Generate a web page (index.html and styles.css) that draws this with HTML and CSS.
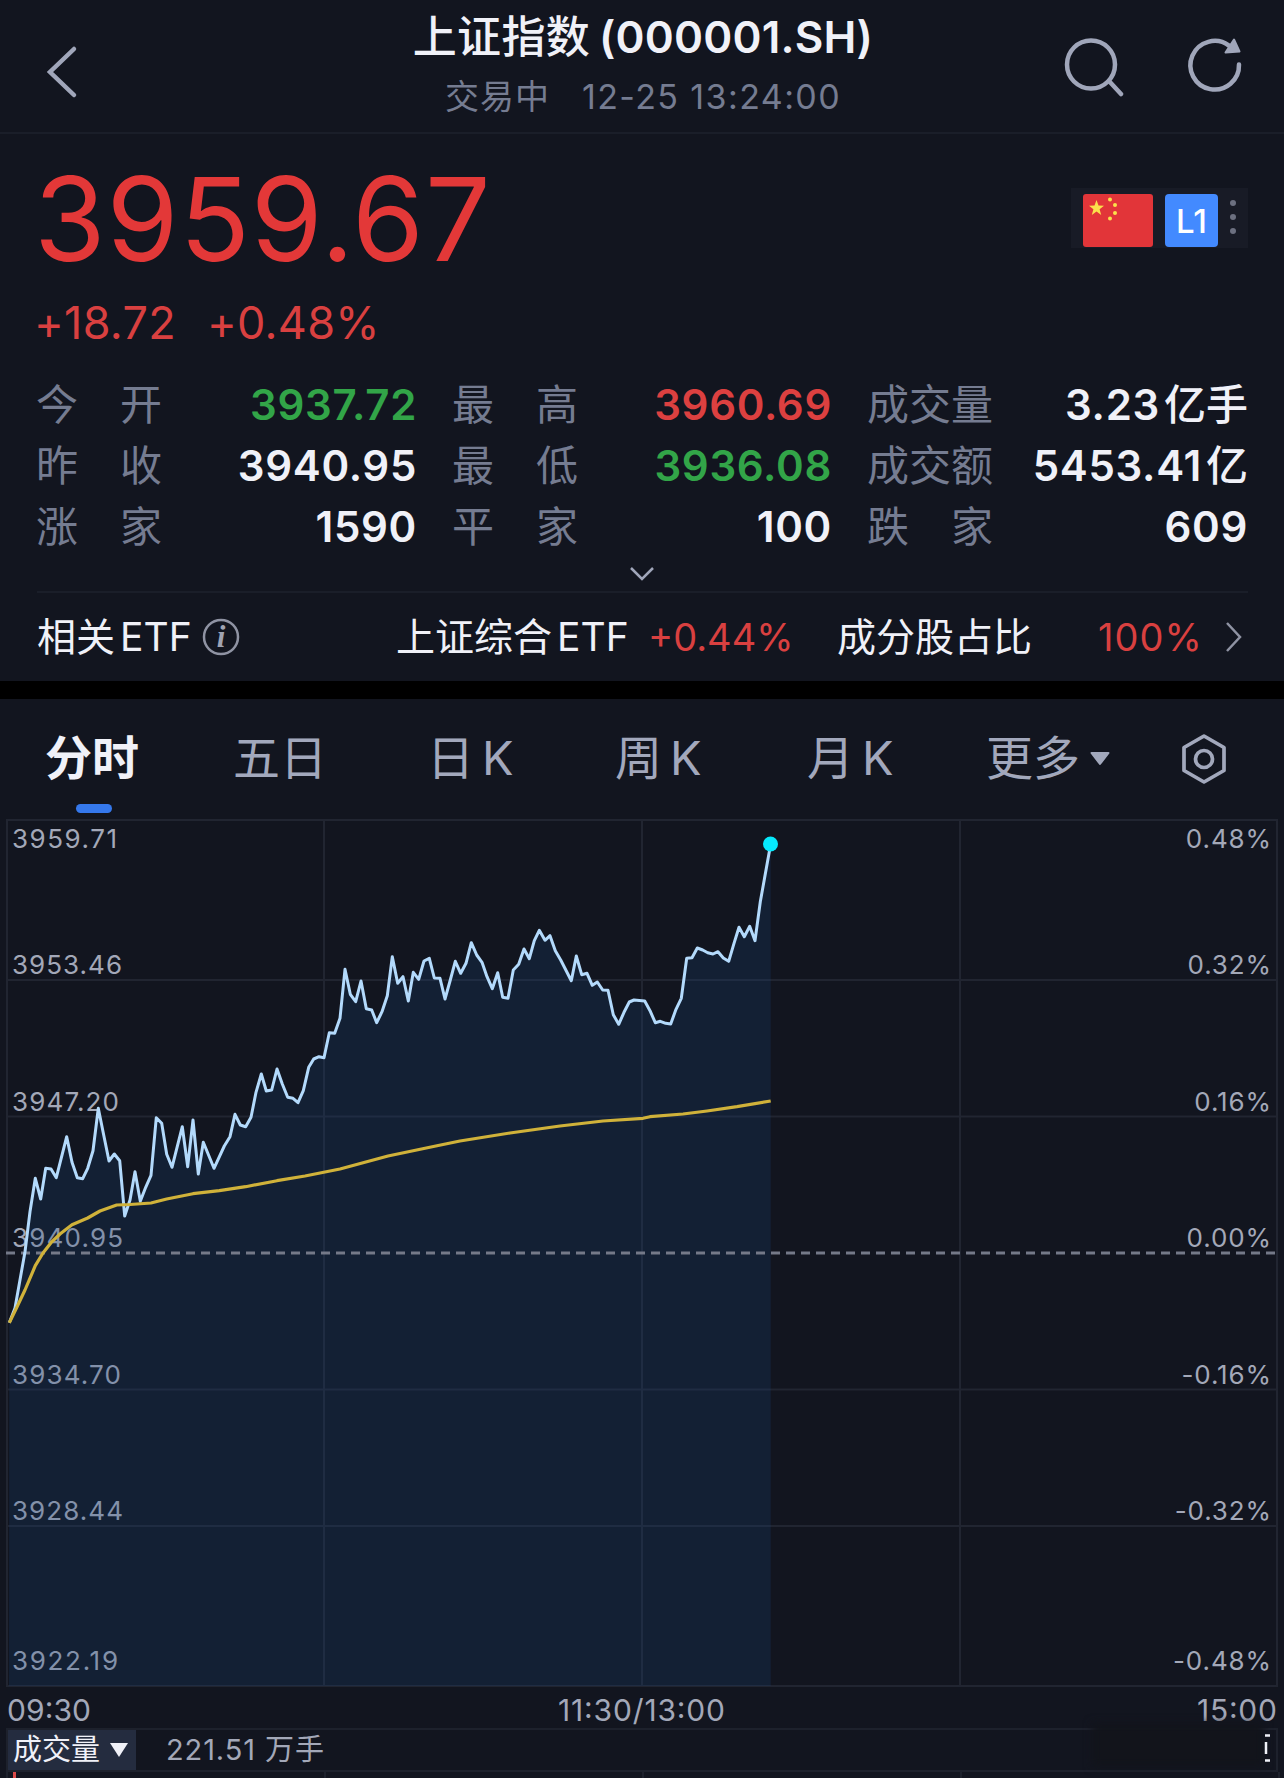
FILE: index.html
```html
<!DOCTYPE html>
<html lang="zh-CN">
<head>
    <meta charset="UTF-8" />
    <meta name="viewport" content="width=device-width, initial-scale=1" />
    <title>上证指数 (000001.SH)</title>
    <link rel="stylesheet" href="styles.css">
</head>
<body>

    <!-- Header -->
    <header class="header">
        <svg class="back" width="36" height="56" viewBox="0 0 36 56"><path d="M31 5 7 28l24 23" /></svg>
        <div class="heading">
            <h1>上证指数<span>(000001.SH)</span></h1>
            <p><span class="state">交易中</span><span class="time">12-25 13:24:00</span></p>
        </div>
        <div class="actions">
            <svg width="64" height="64" viewBox="0 0 64 64"><circle cx="30" cy="31.5" r="24" /><path d="m48 48 12 13" /></svg>
            <svg width="60" height="64" viewBox="0 0 60 64">
                <path d="M54 31.5A24.3 24.3 0 1 1 44 12.6" />
                <path class="solid" d="m49 6.500 5.500 12-14 1z" />
            </svg>
        </div>
    </header>

    <!-- Price -->
    <section class="quote">
        <div class="price-row">
            <div class="price">3959.67</div>
            <div class="badges">
                <svg class="flag" width="70" height="53" viewBox="0 0 70 53">
                    <rect width="70" height="53" rx="3" />
                    <path d="m13.500 6 2 5.600 5.500.1-4.400 3.600 1.600 5.700-4.700-3.400L8.800 21l1.600-5.700L6 11.700l5.500-.1z" />
                    <circle cx="27" cy="5.500" r="2" /><circle cx="32" cy="11" r="2" />
                    <circle cx="32" cy="19" r="2" /><circle cx="27" cy="24.500" r="2" />
                </svg>
                <span class="level">L1</span>
                <span class="dots"><i></i><i></i><i></i></span>
            </div>
        </div>
        <div class="change"><span>+18.72</span><span>+0.48%</span></div>

        <div class="stats">
            <div class="stat"><label><b>今</b><b>开</b></label><span class="green">3937.72</span></div>
            <div class="stat"><label><b>最</b><b>高</b></label><span class="red">3960.69</span></div>
            <div class="stat"><label><b>成</b><b>交</b><b>量</b></label><span>3.23<em>亿手</em></span></div>
            <div class="stat"><label><b>昨</b><b>收</b></label><span>3940.95</span></div>
            <div class="stat"><label><b>最</b><b>低</b></label><span class="green">3936.08</span></div>
            <div class="stat"><label><b>成</b><b>交</b><b>额</b></label><span>5453.41<em>亿</em></span></div>
            <div class="stat"><label><b>涨</b><b>家</b></label><span>1590</span></div>
            <div class="stat"><label><b>平</b><b>家</b></label><span>100</span></div>
            <div class="stat"><label><b>跌</b><b>家</b></label><span>609</span></div>
        </div>
        <svg class="expand" width="30" height="18" viewBox="0 0 30 18"><path d="m4 3 11 11L26 3" /></svg>

        <!-- Related ETF -->
        <div class="etf">
            <span class="etf-title">相关<i>ETF</i></span>
            <svg class="info" width="38" height="38" viewBox="0 0 38 38">
                <circle cx="19" cy="19" r="17" />
                <text x="19" y="29">i</text>
            </svg>
            <span class="etf-name">上证综合<i>ETF</i></span>
            <span class="etf-change">+0.44%</span>
            <span class="etf-label">成分股占比</span>
            <span class="etf-ratio">100%</span>
            <svg class="next" width="22" height="34" viewBox="0 0 22 34"><path d="m4 3 13 14L4 31" /></svg>
        </div>
    </section>

    <!-- Tabs -->
    <nav class="tabs">
        <a class="active">分时</a>
        <a>五日</a>
        <a>日<i>K</i></a>
        <a>周<i>K</i></a>
        <a>月<i>K</i></a>
        <a class="more">更多<svg width="22" height="15" viewBox="0 0 22 15"><path d="M2.500 2h17L11 13z" /></svg></a>
        <svg class="setting" width="48" height="54" viewBox="0 0 48 54">
            <path d="M24 4 44 15.500v23L24 50 4 38.500v-23z" /><circle cx="24" cy="27" r="8.500" />
        </svg>
    </nav>

    <!-- Minute chart -->
    <svg class="chart" width="1284" height="912" viewBox="0 816 1284 912">
        <path class="grid" d="M7 820H1277V1686H7zM7 980H1277M7 1116.500H1277M7 1389.500H1277M7 1526H1277M324 820V1686M642 820V1686M960 820V1686" />
        <g class="axis">
            <text x="12" y="848" textLength="105">3959.71</text>
            <text x="12" y="974" textLength="110">3953.46</text>
            <text x="12" y="1111" textLength="107">3947.20</text>
            <text x="12" y="1247" textLength="111">3940.95</text>
            <text x="12" y="1384" textLength="109">3934.70</text>
            <text x="12" y="1520" textLength="111">3928.44</text>
            <text x="12" y="1670" textLength="106">3922.19</text>
        </g>
        <g class="axis right">
            <text x="1272" y="848">0.48%</text>
            <text x="1272" y="974">0.32%</text>
            <text x="1272" y="1111">0.16%</text>
            <text x="1272" y="1247">0.00%</text>
            <text x="1272" y="1384">-0.16%</text>
            <text x="1272" y="1520">-0.32%</text>
            <text x="1272" y="1670">-0.48%</text>
        </g>
        <polygon id="area" />
        <path class="base" d="M6 1253H1277" />
        <polyline id="price" points="9.3,1322.7 15,1308 25,1251.7 30,1211.7 35.3,1178.3 40.7,1199 45.7,1168.3 51,1169 56.3,1177.7 66.7,1136.7 72,1162.3 77.3,1177.7 82.7,1178.7 87.7,1168.3 93,1150.7 98.3,1108.3 103.7,1135 109,1161 114.3,1154 119.7,1160.7 124.7,1216 130,1200 135,1171.7 140.3,1201.3 145.7,1187.3 151,1175.3 156.3,1117.7 161.7,1123.3 166.7,1154.3 172,1167.3 182.3,1126.7 187.7,1166.7 193,1120 198.3,1174 203.3,1142.3 214,1168.3 224.3,1146 230,1136.7 235,1114.3 240.3,1125 245.7,1126.7 251,1117.3 256,1092.3 261.3,1074 266.3,1091 271.7,1090 277,1069 282.3,1084 287.7,1097.3 293,1098.3 298,1102.7 303.3,1090.7 308.7,1067.3 313.7,1059 319,1056.7 324,1057.7 329.3,1032.7 334.7,1033.3 340,1018.3 345,969.3 350.3,994.3 355.7,1001.7 361,981 366.3,1008.7 371.7,1010 376.7,1022.7 382,1011.7 387.3,995.7 392.3,956.7 397.7,983.3 403,976.7 408.3,1001 413.3,972.3 418.7,979.3 424,961 429.3,958.3 434.3,978 440,978.3 445,999 450.3,980 455.3,961.3 460.7,973.3 466,963.3 471.3,942.7 476.7,955 482,962.3 487,976.7 492.3,988.7 497.7,972.7 502.7,997.3 508,998.3 513.3,970 518.7,964.3 524,949 529.3,958.7 534.3,940.7 539.3,930.3 545,940.3 550,935.7 555.3,950.7 560.7,960 571.3,980.7 576.3,956 581.7,974.7 587,973.3 592.3,985.3 597.3,982 602.7,990 608,990.3 613.3,1014.7 618.7,1024.3 624,1012.3 629.3,1002 634,1000 644.7,1001 650,1010.7 655.3,1022.7 660.3,1021.3 665.7,1023.3 670.7,1024 676,1009.3 681.3,998.3 686.7,958.3 692,957.7 697.3,948 702.7,950 707.7,952.7 713,954 718,951.7 723.3,958 728.7,961.3 734,943.3 739,927.3 744.3,936.7 749.7,926.3 755,940.7 760.3,901.7 770.7,844" />
        <polyline id="average" points="9.3,1322.7 16,1309 25,1290 35.3,1265.7 43,1253 51,1242.7 60,1234 72,1224.7 87.7,1218 100,1211 116.7,1205 130,1204.500 151,1203 166.7,1199 193,1193.7 219.3,1190.7 245.7,1186.7 277,1180.7 305,1176 340,1169 388,1156 437,1145.7 460,1141 510,1133 560,1126 603,1121 643,1118.3 650,1116.7 683,1114 707,1111 737,1106.7 770.7,1101" />
        <circle class="now" cx="770.500" cy="844" r="7.500" />
        <g class="hours">
            <text x="7" y="1721" textLength="84">09:30</text>
            <text x="558" y="1721" textLength="167">11:30/13:00</text>
            <text x="1197" y="1721" textLength="80">15:00</text>
        </g>
    </svg>

    <!-- Volume -->
    <section class="volume">
        <div class="volume-bar">
            <span class="volume-name">成交量<svg width="20" height="16" viewBox="0 0 20 16"><path d="M1 1h18l-9 14z" /></svg></span>
            <span class="volume-value">221.51 <i>万手</i></span>
            <span class="smudge"></span>
            <svg class="bracket" width="6" height="32" viewBox="0 0 6 32"><path d="M1 3.500H6M2 10V22M1 28.500H6" /></svg>
        </div>
        <div class="volume-plot"><i></i><i></i><i></i><i></i></div>
    </section>

    <script>
        // close the price line down to the bottom of the plot
        const line = document.getElementById("price").getAttribute("points");
        document.getElementById("area").setAttribute("points", "9,1686 " + line + " 770.7,1686");
    </script>

</body>
</html>
```
FILE: styles.css
```css
* {
    box-sizing: border-box;
}
body {
    margin: 0;
    width: 1284px;
    height: 1778px;
    overflow: hidden;
    background-color: #12151f;
    color: #f0f1f8;
    font-family: Inter, "Noto Sans CJK SC", sans-serif;
}
i, em, b {
    font-style: normal;
    font-weight: inherit;
}
svg {
    display: block;
    fill: none;
    flex: none;
}

/* header */
.header {
    height: 134px;
    border-bottom: 2px solid #1a1e29;
    display: grid;
    grid-template-columns: 1fr auto 1fr;
    padding: 0 41px 0 43px;
}
.header svg {
    stroke: #a0a6ba;
    stroke-width: 4.5;
    stroke-linecap: round;
}
.header .solid {
    fill: #a0a6ba;
    stroke-width: 2;
    stroke-linejoin: round;
}
.back {
    margin-top: 44px;
}
.heading {
    text-align: center;
}
.heading h1 {
    margin: 10px 0 0;
    font-size: 44px;
    line-height: 54px;
    font-weight: 500;
    letter-spacing: 0.3px;
    white-space: nowrap;
}
.heading h1 span {
    margin-left: 9px;
    font-weight: 600;
    letter-spacing: 0.2px;
}
.heading p {
    margin: 11px 0 0;
    display: flex;
    justify-content: center;
    gap: 32px;
    font-size: 34px;
    line-height: 44px;
    color: #757c91;
}
.state {
    letter-spacing: 1px;
}
.time {
    letter-spacing: 1.4px;
}
.actions {
    display: flex;
    justify-content: flex-end;
    gap: 60px;
    padding-top: 33px;
    margin-right: -2px;
}

/* quote */
.quote {
    height: 565px;
    padding: 0 36px 0 37px;
    border-bottom: 18px solid #000;
}
.price-row {
    display: flex;
    justify-content: space-between;
    height: 152px;
}
.price {
    margin: 15px 0 0 -3px;
    font-size: 116px;
    line-height: 140px;
    letter-spacing: 0.9px;
    color: #e33838;
}
.badges {
    margin-top: 54px;
    width: 177px;
    height: 60px;
    padding: 6px 0 0 12px;
    display: flex;
    gap: 12px;
    background-color: #181b26;
}
.flag rect {
    fill: #e23539;
}
.flag path, .flag circle {
    fill: #fbe14b;
}
.level {
    width: 53px;
    height: 53px;
    border-radius: 4px;
    background-color: #438aff;
    color: #fff;
    font-size: 33px;
    line-height: 55px;
    font-weight: 500;
    text-align: center;
}
.dots {
    display: flex;
    flex-direction: column;
    gap: 8px;
    padding-top: 6px;
}
.dots i {
    width: 6px;
    height: 6px;
    border-radius: 50%;
    background-color: #6c7080;
}
.change {
    display: flex;
    gap: 31px;
    height: 88px;
    margin-left: -3px;
    padding-top: 10px;
    font-size: 45px;
    line-height: 54px;
    letter-spacing: 0.3px;
    color: #d94040;
}
.stats {
    display: grid;
    grid-template-columns: 378px 377px 378px;
    column-gap: 38px;
    grid-auto-rows: 61px;
}
.stat {
    display: flex;
    justify-content: space-between;
    align-items: center;
    margin-right: -2px;
    font-size: 42px;
    line-height: 60px;
    white-space: nowrap;
}
.stat label {
    width: 126px;
    margin-left: -1px;
    display: flex;
    justify-content: space-between;
    color: #757c91;
}
.stat span {
    font-weight: 600;
    letter-spacing: 0.7px;
}
.stat em {
    margin-left: 4px;
    font-weight: 500;
    letter-spacing: 0;
}
.stat .green {
    color: #32a548;
}
.stat .red {
    color: #dc4040;
}
.expand {
    margin: 8px auto 0;
    position: relative;
    left: -1px;
    stroke: #a0a6ba;
    stroke-width: 2.5;
}
.etf {
    margin-top: 8px;
    height: 89px;
    border-top: 2px solid #1a1e29;
    display: flex;
    align-items: center;
    font-size: 38px;
    line-height: 46px;
    white-space: nowrap;
}
.etf i {
    margin-left: 5px;
}
.etf-title, .etf-name, .etf-label {
    font-size: 39px;
}
.etf-title {
    width: 165px;
}
.info circle {
    stroke: #8f93a3;
    stroke-width: 2.5;
}
.info text {
    fill: #a0a4b3;
    font: italic bold 31px "Liberation Serif", serif;
    text-anchor: middle;
}
.etf-name {
    margin-left: 156px;
    width: 252px;
}
.etf-change {
    width: 189px;
    color: #d94040;
}
.etf-label {
    width: 261px;
}
.etf-ratio {
    width: 125px;
    letter-spacing: 1px;
    color: #d94040;
}
.next {
    stroke: #8f93a3;
    stroke-width: 2.5;
}

/* tabs */
.tabs {
    height: 117px;
    display: flex;
    align-items: flex-start;
    padding-left: 45px;
    font-size: 47px;
    line-height: 66px;
    color: #a2a8bc;
    white-space: nowrap;
}
.tabs a {
    margin-top: 26px;
    width: 188px;
}
.tabs a:nth-child(2) {
    width: 194px;
}
.tabs a:nth-child(4) {
    width: 192px;
}
.tabs a:nth-child(5) {
    width: 179px;
}
.tabs a i {
    margin-left: 8px;
}
.tabs .active {
    position: relative;
    color: #f0f1f8;
    font-weight: 600;
}
.tabs .active::after {
    content: "";
    position: absolute;
    left: 31px;
    top: 79px;
    width: 36px;
    height: 9px;
    border-radius: 5px;
    background-color: #3578ec;
}
.tabs .more {
    display: flex;
    align-items: center;
    gap: 9px;
    width: 194px;
}
.more svg {
    fill: #a2a8bc;
    stroke: #a2a8bc;
    stroke-width: 2;
    stroke-linejoin: round;
}
.setting {
    margin-top: 33px;
    stroke: #a2a8bc;
    stroke-width: 3.7;
    stroke-linejoin: round;
}

/* chart */
.grid {
    stroke: #212531;
    stroke-width: 2;
}
.axis text {
    fill: #a3a8b8;
    font-size: 26px;
}
.right text {
    text-anchor: end;
    letter-spacing: 0.9px;
}
#area {
    fill: rgba(28, 68, 125, 0.23);
}
.base {
    stroke: #747988;
    stroke-width: 3;
    stroke-dasharray: 9 6;
}
#price {
    stroke: #b3dafc;
    stroke-width: 3;
    stroke-linejoin: round;
}
#average {
    stroke: #d0b23a;
    stroke-width: 3.2;
    stroke-linejoin: round;
}
.now {
    fill: #06e9fc;
}
.hours text {
    fill: #a3a8b8;
    font-size: 30px;
}

/* volume */
.volume {
    margin: 0 6px;
}
.volume-bar {
    position: relative;
    height: 44px;
    border: 2px solid #1d212c;
    display: flex;
    align-items: center;
    font-size: 29px;
    line-height: 42px;
}
.volume-name {
    width: 128px;
    height: 40px;
    padding-left: 5px;
    display: flex;
    align-items: center;
    gap: 9px;
    background-color: #242c3f;
}
.volume-name svg {
    fill: #f0f1f8;
}
.volume-value {
    margin-left: 30px;
    letter-spacing: 0.9px;
    color: #a3a8b8;
}
.smudge {
    position: absolute;
    right: 12px;
    top: -7px;
    width: 172px;
    height: 44px;
    background-color: #12141b;
    filter: blur(4px);
}
.bracket {
    position: absolute;
    right: 6px;
    top: 2px;
    stroke: #f0f1f8;
    stroke-width: 2.5;
}
.volume-plot {
    height: 6px;
    display: grid;
    grid-template-columns: 318px 318px 318px 318px;
    border-left: 2px solid #1d212c;
}
.volume-plot i {
    border-right: 2px solid #1d212c;
}
.volume-plot i:first-child {
    background: linear-gradient(#d94a48, #d94a48) 5px 0 / 3px 6px no-repeat;
}
```
